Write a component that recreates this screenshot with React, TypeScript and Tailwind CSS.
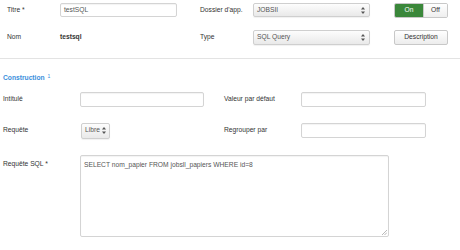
import React from "react";

const Arrows = () => (
  <svg width="4" height="7" viewBox="0 0 4 7" className="shrink-0">
    <path d="M2 0 L4 2.6 L0 2.6 Z" fill="#555" />
    <path d="M2 7 L4 4.4 L0 4.4 Z" fill="#555" />
  </svg>
);

const Select = ({ text, w, h = "h-[14px]", px = "px-[3px] pr-[4px]" }: { text: string; w: string; h?: string; px?: string }) => (
  <div
    className={`${w} ${h} ${px} flex items-center justify-between rounded-[2px] border border-[#cfcfcf] bg-gradient-to-b from-[#fdfdfd] to-[#e9e9e9] text-[#555] shadow-[0_1px_1px_rgba(0,0,0,0.06)]`}
  >
    <span>{text}</span>
    <Arrows />
  </div>
);

const Input = ({ w, text, h = "h-[15px]" }: { w: string; text?: string; h?: string }) => (
  <div className={`${w} ${h} flex items-center px-[3px] rounded-[2px] border border-[#d4d4d4] bg-white text-[#555] shadow-[inset_0_1px_1px_rgba(0,0,0,0.05)]`}>
    {text}
  </div>
);

export default function App() {
  return (
    <div
      className="w-[460px] h-[250px] bg-white text-[6.7px] text-[#333] overflow-hidden"
      style={{ fontFamily: '"Liberation Sans", Arial, sans-serif' }}
    >
      {/* Row 1 */}
      <div className="flex items-center h-[14px] mt-[3px]">
        <div className="w-[60px] pl-[7px]">Titre *</div>
        <Input w="w-[117px]" h="h-[14px]" text="testSQL" />
        <div className="w-[23px]" />
        <div className="w-[53px]">Dossier d'app.</div>
        <Select w="w-[117px]" text="JOBSII" />
        <div className="w-[24px]" />
        <div className="flex w-[54px] h-[15px] rounded-[2px] overflow-hidden border border-[#c8c8c8]">
          <div className="w-[28px] bg-[#3a873a] text-white flex items-center justify-center">On</div>
          <div className="flex-1 bg-gradient-to-b from-white to-[#eeeeee] text-[#333] flex items-center justify-center border-l border-[#c8c8c8]">Off</div>
        </div>
      </div>

      {/* Row 2 */}
      <div className="flex items-center h-[15px] mt-[13px]">
        <div className="w-[60px] pl-[7px]">Nom</div>
        <div className="w-[117px] font-bold text-[#333]">testsql</div>
        <div className="w-[23px]" />
        <div className="w-[53px]">Type</div>
        <Select w="w-[117px]" h="h-[15px]" text="SQL Query" />
        <div className="w-[24px]" />
        <div className="w-[54px] h-[15px] flex items-center justify-center rounded-[2px] border border-[#c8c8c8] bg-gradient-to-b from-white to-[#ececec] text-[#333]">
          Description
        </div>
      </div>

      <div className="h-px bg-[#e3e3e3] mt-[13px]" />

      {/* Construction */}
      <div className="mt-[15px] pl-[3px] h-[8px] flex items-center text-[#3a8fdc] font-bold">
        Construction <sup className="ml-[3px] text-[5px] font-normal">1</sup>
      </div>

      {/* Intitulé row */}
      <div className="flex items-center h-[15px] mt-[10px]">
        <div className="w-[80px] pl-[3px]">Intitulé</div>
        <Input w="w-[124px]" />
        <div className="w-[20px]" />
        <div className="w-[77px]">Valeur par défaut</div>
        <Input w="w-[125px]" />
      </div>

      {/* Requête row */}
      <div className="flex items-center h-[17px] mt-[15px]">
        <div className="w-[81px] pl-[3px]">Requête</div>
        <Select w="w-[29px]" h="h-[16px]" px="pl-[3px] pr-[3px]" text="Libre" />
        <div className="w-[114px]" />
        <div className="w-[77px]">Regrouper par</div>
        <Input w="w-[125px]" />
      </div>

      {/* Requête SQL */}
      <div className="flex items-start mt-[16px]">
        <div className="w-[80px] pl-[3px] pt-[4px]">Requête SQL *</div>
        <div className="relative w-[309px] h-[82px] rounded-[2px] border border-[#d4d4d4] bg-white text-[#555] px-[3px] pt-[4px] shadow-[inset_0_1px_1px_rgba(0,0,0,0.05)]">
          SELECT nom_papier FROM jobsll_papiers WHERE id=8
          <svg width="5" height="5" viewBox="0 0 5 5" className="absolute right-[1px] bottom-[1px]">
            <path d="M5 0 L0 5 M5 2.5 L2.5 5" stroke="#999" strokeWidth="0.7" />
          </svg>
        </div>
      </div>
    </div>
  );
}
